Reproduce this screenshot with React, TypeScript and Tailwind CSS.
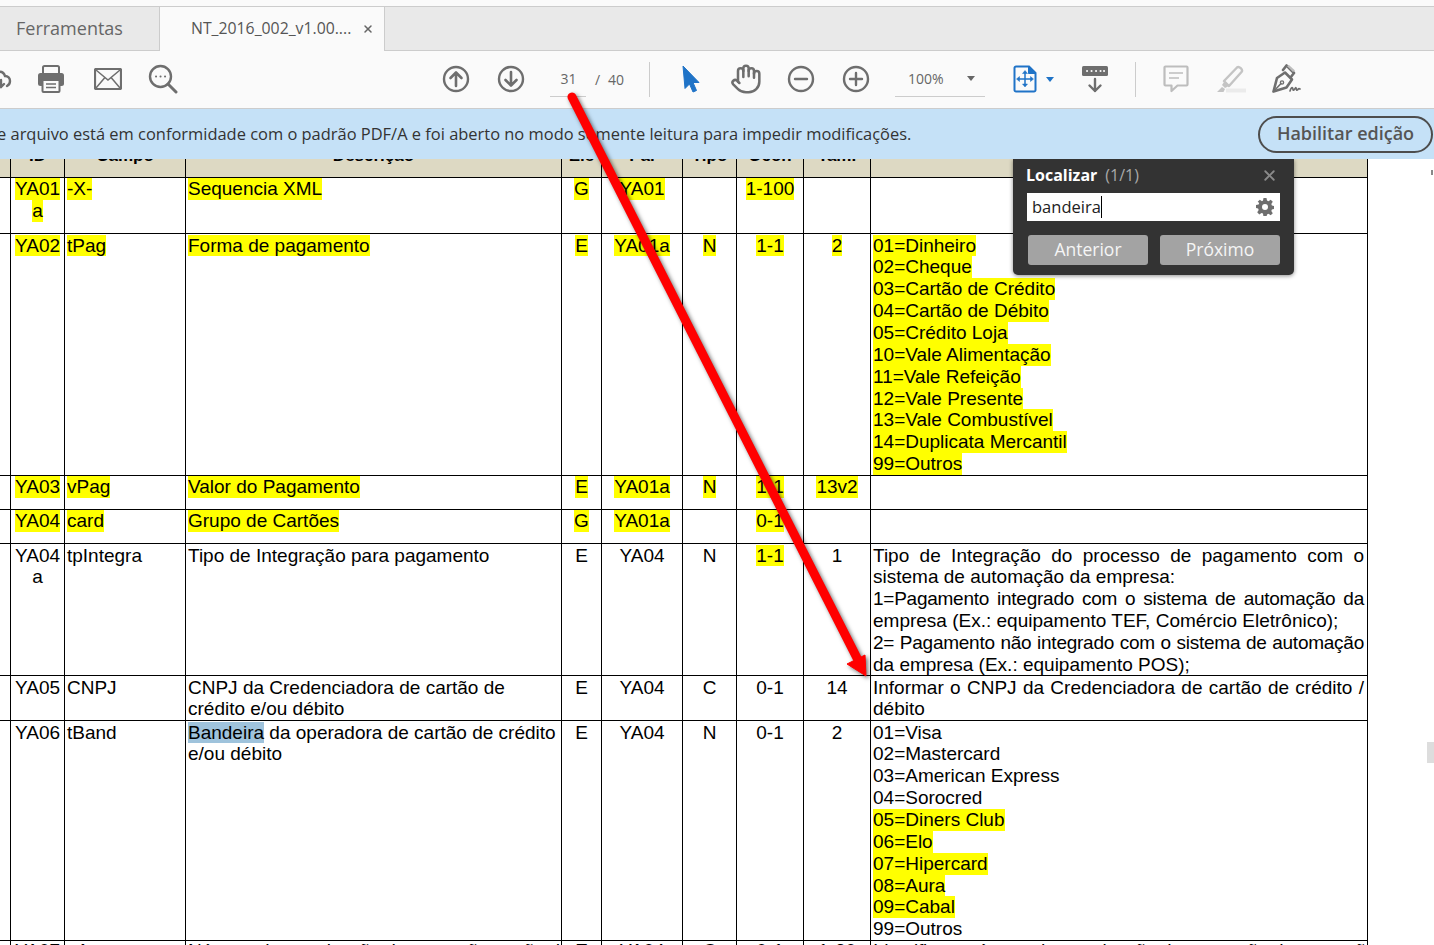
import type { ReactNode } from "react";
import { Hand, X } from "lucide-react";

const COLS = "grid-cols-[11px_54px_121px_376px_40px_81px_54px_67px_67px_497px]";
const ICON = "#6e6e6e";

function Line({ children, hit, center }: { children: ReactNode; hit?: boolean; center?: boolean }) {
  return (
    <div className={`h-[21.85px] whitespace-nowrap leading-[21.85px] ${center ? "text-center" : ""}`}>
      <span className={`inline-block h-[21.85px] ${hit ? "bg-[#ffff00]" : ""}`}>{children}</span>
    </div>
  );
}

// Lines of the notes column that the PDF stretches to the cell's full width
function Just({ children, tight }: { children: ReactNode; tight?: boolean }) {
  return (
    <div className={`h-[21.85px] whitespace-nowrap leading-[21.85px] [text-align-last:justify] ${tight ? "tracking-[-0.25px]" : ""}`}>
      {children}
    </div>
  );
}

function Peek({ children }: { children: ReactNode }) {
  return <div className="-mt-px">{children}</div>;
}

type Row = {
  h: string;
  nudge?: boolean;
  id: ReactNode;
  campo: ReactNode;
  desc: ReactNode;
  ele: ReactNode;
  pai: ReactNode;
  tipo: ReactNode;
  ocor: ReactNode;
  tam: ReactNode;
  obs: ReactNode;
};

const PAYMENT = [
  "01=Dinheiro",
  "02=Cheque",
  "03=Cartão de Crédito",
  "04=Cartão de Débito",
  "05=Crédito Loja",
  "10=Vale Alimentação",
  "11=Vale Refeição",
  "12=Vale Presente",
  "13=Vale Combustível",
  "14=Duplicata Mercantil",
  "99=Outros",
];

const BRANDS: [string, boolean][] = [
  ["01=Visa", false],
  ["02=Mastercard", false],
  ["03=American Express", false],
  ["04=Sorocred", false],
  ["05=Diners Club", true],
  ["06=Elo", true],
  ["07=Hipercard", true],
  ["08=Aura", true],
  ["09=Cabal", true],
  ["99=Outros", false],
];

const ROWS: Row[] = [
  {
    h: "h-[56px]",
    id: (
      <>
        <Line hit center>YA01</Line>
        <Line hit center>a</Line>
      </>
    ),
    campo: <Line hit>-X-</Line>,
    desc: <Line hit>Sequencia XML</Line>,
    ele: <Line hit center>G</Line>,
    pai: <Line hit center>YA01</Line>,
    tipo: null,
    ocor: <Line hit center>1-100</Line>,
    tam: null,
    obs: null,
  },
  {
    h: "h-[242px]",
    nudge: true,
    id: <Line hit center>YA02</Line>,
    campo: <Line hit>tPag</Line>,
    desc: <Line hit>Forma de pagamento</Line>,
    ele: <Line hit center>E</Line>,
    pai: <Line hit center>YA01a</Line>,
    tipo: <Line hit center>N</Line>,
    ocor: <Line hit center>1-1</Line>,
    tam: <Line hit center>2</Line>,
    obs: PAYMENT.map((item) => <Line key={item} hit>{item}</Line>),
  },
  {
    h: "h-[34px]",
    id: <Line hit center>YA03</Line>,
    campo: <Line hit>vPag</Line>,
    desc: <Line hit>Valor do Pagamento</Line>,
    ele: <Line hit center>E</Line>,
    pai: <Line hit center>YA01a</Line>,
    tipo: <Line hit center>N</Line>,
    ocor: <Line hit center>1-1</Line>,
    tam: <Line hit center>13v2</Line>,
    obs: null,
  },
  {
    h: "h-[34px]",
    id: <Line hit center>YA04</Line>,
    campo: <Line hit>card</Line>,
    desc: <Line hit>Grupo de Cartões</Line>,
    ele: <Line hit center>G</Line>,
    pai: <Line hit center>YA01a</Line>,
    tipo: null,
    ocor: <Line hit center>0-1</Line>,
    tam: null,
    obs: null,
  },
  {
    h: "h-[132px]",
    nudge: true,
    id: (
      <>
        <Line center>YA04</Line>
        <Line center>a</Line>
      </>
    ),
    campo: <Line>tpIntegra</Line>,
    desc: <Line>Tipo de Integração para pagamento</Line>,
    ele: <Line center>E</Line>,
    pai: <Line center>YA04</Line>,
    tipo: <Line center>N</Line>,
    ocor: <Line hit center>1-1</Line>,
    tam: <Line center>1</Line>,
    obs: (
      <>
        <Just>Tipo de Integração do processo de pagamento com o</Just>
        <Line>sistema de automação da empresa:</Line>
        <Just tight>1=Pagamento integrado com o sistema de automação da</Just>
        <Line>empresa (Ex.: equipamento TEF, Comércio Eletrônico);</Line>
        <Just tight>2= Pagamento não integrado com o sistema de automação</Just>
        <Line>da empresa (Ex.: equipamento POS);</Line>
      </>
    ),
  },
  {
    h: "h-[45px]",
    nudge: true,
    id: <Line center>YA05</Line>,
    campo: <Line>CNPJ</Line>,
    desc: (
      <>
        <Line>CNPJ da Credenciadora de cartão de</Line>
        <Line>crédito e/ou débito</Line>
      </>
    ),
    ele: <Line center>E</Line>,
    pai: <Line center>YA04</Line>,
    tipo: <Line center>C</Line>,
    ocor: <Line center>0-1</Line>,
    tam: <Line center>14</Line>,
    obs: (
      <>
        <Just>Informar o CNPJ da Credenciadora de cartão de crédito /</Just>
        <Line>débito</Line>
      </>
    ),
  },
  {
    h: "h-[220px]",
    nudge: true,
    id: <Line center>YA06</Line>,
    campo: <Line>tBand</Line>,
    desc: (
      <>
        <Line>
          <span className="bg-[#9fc3dc]">Bandeira</span> da operadora de cartão de crédito
        </Line>
        <Line>e/ou débito</Line>
      </>
    ),
    ele: <Line center>E</Line>,
    pai: <Line center>YA04</Line>,
    tipo: <Line center>N</Line>,
    ocor: <Line center>0-1</Line>,
    tam: <Line center>2</Line>,
    obs: BRANDS.map(([item, hit]) => <Line key={item} hit={hit}>{item}</Line>),
  },
  {
    h: "h-[30px]",
    id: <Peek><Line center>YA07</Line></Peek>,
    campo: <Peek><Line>cAut</Line></Peek>,
    desc: <Peek><Just tight>Número de autorização da operação cartão de crédito</Just></Peek>,
    ele: <Peek><Line center>E</Line></Peek>,
    pai: <Peek><Line center>YA04</Line></Peek>,
    tipo: <Peek><Line center>C</Line></Peek>,
    ocor: <Peek><Line center>0-1</Line></Peek>,
    tam: <Peek><Line center>1-20</Line></Peek>,
    obs: <Peek><Just tight>Identifica o número da autorização da transação da operação</Just></Peek>,
  },
];

function DocRow({ row }: { row: Row }) {
  const cells = [row.id, row.campo, row.desc, row.ele, row.pai, row.tipo, row.ocor, row.tam];
  const top = row.nudge ? "pt-[0.6px]" : "";
  return (
    <div className={`grid ${COLS} ${row.h} box-border w-[1368px] border-b border-black`}>
      <div className="border-r border-black" />
      {cells.map((cell, index) => (
        <div key={index} className={`overflow-hidden border-r border-black px-[2px] ${top}`}>
          {cell}
        </div>
      ))}
      <div className={`overflow-hidden border-r border-black pl-[2px] pr-[3px] ${top}`}>{row.obs}</div>
    </div>
  );
}

function HeaderRow() {
  const labels = ["ID", "Campo", "Descrição", "Ele", "Pai", "Tipo", "Ocor.", "Tam.", ""];
  return (
    <div className={`grid ${COLS} box-border h-[19px] w-[1368px] border-b border-black bg-[#ddd9c3]`}>
      <div className="border-r border-black" />
      {labels.map((label, index) => (
        <div key={index} className="overflow-hidden border-r border-black">
          <div className="-mt-[14px] text-center text-[17px] font-bold leading-[22px]">{label}</div>
        </div>
      ))}
    </div>
  );
}

function CircleIcon({ children }: { children: ReactNode }) {
  return (
    <svg width="28" height="28" viewBox="0 0 28 28" fill="none" stroke={ICON} strokeWidth="2.400" strokeLinecap="round" strokeLinejoin="round">
      <circle cx="14" cy="14" r="12" />
      {children}
    </svg>
  );
}

function Tool({ children }: { children: ReactNode }) {
  return <div className="flex h-full w-[55px] shrink-0 items-center justify-center">{children}</div>;
}

function Toolbar() {
  return (
    <div className="box-border flex h-[58px] items-center overflow-hidden border-b border-[#cccccc] bg-[#fafafa] pb-[1px] text-[14px] text-[#666666]">
      <div className="h-[28px] w-[12px] shrink-0 overflow-hidden">
        <svg width="12" height="28" viewBox="0 0 12 28" fill="none" stroke={ICON} strokeWidth="2.400" strokeLinecap="round">
          <path d="M-2 7c4-1 6 1 7 4 3 0 5 2 5 5 0 2-1 4-3 5M-2 19l3 3 3-3M1 22v-7" />
        </svg>
      </div>
      <div className="ml-[11px] flex h-full w-[56px] shrink-0 items-center justify-center">
        <svg width="28" height="28" viewBox="0 0 28 28">
          <path d="M6 9V2.500A1.500 1.500 0 0 1 7.500 1h13A1.500 1.500 0 0 1 22 2.500V9" fill="none" stroke={ICON} strokeWidth="2" />
          <rect x="1" y="8" width="26" height="13" rx="2.500" fill={ICON} />
          <rect x="5.500" y="15" width="17" height="12" rx="1" fill="#fafafa" stroke={ICON} strokeWidth="2" />
          <path d="M9 19h10M9 22.500h10" stroke={ICON} strokeWidth="1.500" />
        </svg>
      </div>
      <div className="ml-px flex h-full w-[56px] shrink-0 items-center justify-center">
        <svg width="28" height="22" viewBox="0 0 28 22" fill="none" stroke={ICON} strokeWidth="2">
          <rect x="1" y="1" width="26" height="20" rx="1" strokeWidth="2.200" />
          <path d="M2 2l12 10L26 2M2 20l8.500-10M26 20l-8.500-10" strokeWidth="1.500" />
        </svg>
      </div>
      <div className="-ml-px flex h-full w-[55px] shrink-0 items-center justify-center">
        <svg width="30" height="30" viewBox="0 0 30 30" fill="none" stroke={ICON} strokeWidth="2.400" strokeLinecap="round">
          <circle cx="12.500" cy="12.500" r="10.500" />
          <path d="M20 20l8 8" strokeWidth="3" />
          <path d="M8 12.500h.1M12.500 12.500h.1M17 12.500h.1" strokeWidth="2" />
        </svg>
      </div>

      <div className="ml-[238px] flex h-full shrink-0">
        <Tool>
          <CircleIcon>
            <path d="M14 21V8M8.500 13L14 7.500 19.500 13" strokeWidth="2.600" />
          </CircleIcon>
        </Tool>
        <Tool>
          <CircleIcon>
            <path d="M14 7v13M8.500 15l5.500 5.500 5.500-5.500" strokeWidth="2.600" />
          </CircleIcon>
        </Tool>
      </div>

      <div className="ml-[12px] box-border flex h-[35px] w-[36px] shrink-0 items-center justify-center border-b border-[#cccccc] pl-[1px]">31</div>
      <span className="ml-[9px] w-[8px] shrink-0">/</span>
      <span className="ml-[5px] shrink-0">40</span>
      <div className="ml-[25px] h-[35px] w-px shrink-0 bg-[#cccccc]" />

      <div className="ml-[13px] flex h-full shrink-0">
        <Tool>
          <svg width="18" height="28" viewBox="0 0 18 28">
            <path d="M1 1l16 16.500h-6l3.500 8-3.500 1.500-3.500-8L3 23.500z" fill="#1f73c7" stroke="#1f73c7" strokeLinejoin="round" />
          </svg>
        </Tool>
        <Tool>
          <Hand size={32} strokeWidth={1.900} color={ICON} />
        </Tool>
        <Tool>
          <CircleIcon>
            <path d="M8 14h12" />
          </CircleIcon>
        </Tool>
        <Tool>
          <CircleIcon>
            <path d="M8 14h12M14 8v12" />
          </CircleIcon>
        </Tool>
      </div>

      <div className="ml-[12px] box-border flex h-[35px] w-[90px] shrink-0 items-center border-b border-[#cccccc] pl-[13px]">
        <span>100%</span>
        <span className="ml-[23px] h-0 w-0 border-x-[4px] border-t-[5px] border-x-transparent border-t-[#666666]" />
      </div>

      <div className="ml-[28px] shrink-0">
        <svg width="24" height="28" viewBox="0 0 24 28" fill="none" stroke="#1f73c7" strokeWidth="2">
          <path d="M1.500 3A1.500 1.500 0 0 1 3 1.500h13l6.500 6.500v17A1.500 1.500 0 0 1 21 26.500H3A1.500 1.500 0 0 1 1.500 25z" />
          <path d="M15.500 1.500V8.500h7" fill="#1f73c7" strokeWidth="1" />
          <path d="M12 7v13M5.500 14h13" strokeWidth="1.500" />
          <path d="M12 5.500l-2.500 3h5zM12 22l-2.500-3h5zM3.500 14l3-2.500v5zM20.500 14l-3-2.500v5z" fill="#1f73c7" strokeWidth="0.500" />
        </svg>
      </div>
      <span className="ml-[9px] h-0 w-0 shrink-0 border-x-[4px] border-t-[5px] border-x-transparent border-t-[#1f73c7]" />

      <div className="ml-[27px] shrink-0">
        <svg width="28" height="28" viewBox="0 0 28 28" fill="none">
          <rect x="1" y="1" width="26" height="10" rx="1.500" fill={ICON} />
          <path d="M6 6h.1M10.500 6h.1M15 6h.1M19.500 6h.1M23 6h.1" stroke="#fafafa" strokeWidth="2" strokeLinecap="round" />
          <path d="M14 14v12M8.500 20.500L14 26l5.500-5.500" stroke={ICON} strokeWidth="2.400" strokeLinecap="round" strokeLinejoin="round" />
        </svg>
      </div>

      <div className="ml-[26px] h-[35px] w-px shrink-0 bg-[#cccccc]" />

      <div className="ml-[27px] shrink-0">
        <svg width="26" height="28" viewBox="0 0 26 28" fill="none" stroke="#bdbdbd" strokeWidth="2.200" strokeLinejoin="round">
          <path d="M2.500 1.500h21a1 1 0 0 1 1 1v17a1 1 0 0 1-1 1H14.500l-6 5.500v-5.500h-6a1 1 0 0 1-1-1v-17a1 1 0 0 1 1-1z" />
          <path d="M6 8h14M6 13h10" strokeWidth="1.400" />
        </svg>
      </div>

      <div className="ml-[27px] shrink-0">
        <svg width="30" height="28" viewBox="0 0 30 28" fill="none">
          <path d="M8 16L21 2.500c2-1.800 6.500 2 4.500 4.500L13 21z" fill="#fafafa" stroke="#c4c4c4" strokeWidth="2.400" strokeLinejoin="round" />
          <path d="M8 17l5 4-4 2-3-3zM1 27l5-5 3 2-1.500 3z" fill="#c4c4c4" />
          <rect x="10" y="23.500" width="20" height="4" fill="#ebebeb" />
        </svg>
      </div>

      <div className="ml-[26px] shrink-0">
        <svg width="30" height="30" viewBox="0 0 30 30" fill="none" stroke={ICON} strokeWidth="2.600" strokeLinejoin="round" strokeLinecap="round">
          <path d="M1.500 27.500L5 14l8-5.500 7 7-5.500 8z" />
          <path d="M1.500 27.500L9 19.500" strokeWidth="1.600" />
          <circle cx="10" cy="18.500" r="1.600" strokeWidth="1.400" />
          <path d="M11 6L14.500 1.500 22 9l-3.500 4.500" />
          <path d="M15 2l6 6 2-1.500L17 1z" fill="#bdbdbd" stroke="none" />
          <path d="M18 27c1-3 2-4 2.500-3s.5 3 1.500 2 1.500-3 2-2 .5 3 1.500 2 1-2 2.500-1" strokeWidth="1.700" />
        </svg>
      </div>
    </div>
  );
}

function FindPanel() {
  return (
    <div className="absolute left-[1013px] top-0 z-20 box-border h-[116px] w-[281px] rounded-b-[5px] bg-[#333333] px-[14px] font-['Open_Sans',sans-serif] shadow-[0_1px_4px_rgba(0,0,0,0.45)]">
      <div className="-ml-px flex h-[33px] items-center pb-[1px]">
        <span className="text-[16px] font-bold text-white">Localizar</span>
        <span className="ml-[8px] text-[16px] text-[#a9a9a9]">(1/1)</span>
        <X size={17} strokeWidth={2.600} color="#8a8a8a" className="ml-auto mr-[2px]" />
      </div>
      <div className="mt-px flex h-[28px] items-center bg-white pl-[5px] pr-[5px] text-[16.500px] text-[#222222]">
        <span>bandeira</span>
        <span className="h-[22px] w-px bg-black" />
        <svg className="ml-auto mr-[1px]" width="18" height="18" viewBox="0 0 18 18">
          <path
            d="M7.500 0h3l.5 2.600 1.500.6L14.700 1.700l2.100 2.100-1.500 2.200.6 1.500 2.600.5v3l-2.600.5-.6 1.500 1.500 2.200-2.100 2.100-2.200-1.500-1.500.6-.5 2.600h-3L7 15.500l-1.500-.6-2.200 1.500-2.100-2.100 1.500-2.200-.6-1.500L0 10.100v-3l2.600-.5.6-1.500L1.700 3.800l2.100-2.100 2.200 1.500L7 2.600z"
            fill={ICON}
          />
          <circle cx="9" cy="9" r="3" fill="#ffffff" />
        </svg>
      </div>
      <div className="mt-[14px] flex justify-between pl-px">
        <div className="flex h-[30px] w-[120px] items-center justify-center rounded-[3px] bg-[#a3a3a3] pb-[2px] text-[17.500px] font-medium text-[#f5f5f5]">Anterior</div>
        <div className="flex h-[30px] w-[120px] items-center justify-center rounded-[3px] bg-[#a3a3a3] pb-[2px] text-[17.500px] font-medium text-[#f5f5f5]">Próximo</div>
      </div>
    </div>
  );
}

function RedArrow() {
  return (
    <svg className="pointer-events-none absolute left-0 top-0 z-30 drop-shadow-[2px_2px_2px_rgba(0,0,0,0.55)]" width="1434" height="945" viewBox="0 0 1434 945" fill="none">
      <path d="M572 97L857 658" stroke="#ff0000" strokeWidth="9" strokeLinecap="round" />
      <path d="M866 676L847 664L865 655z" fill="#ff0000" stroke="#ff0000" strokeLinejoin="round" />
    </svg>
  );
}

export default function App() {
  return (
    <div className="relative h-[945px] w-[1434px] overflow-hidden bg-white [font-family:'Open_Sans',sans-serif]">
      <div className="h-[6px] bg-[#fafafa]" />
      <div className="box-border flex h-[45px] border-y border-[#cccccc] bg-[#e9e9e9]">
        <div className="flex w-[160px] items-center border-r border-[#cccccc] pl-[16px] text-[18px] text-[#666666]">Ferramentas</div>
        <div className="-mb-px flex w-[225px] items-center border-r border-[#cccccc] bg-[#fafafa] pl-[31px] text-[15.800px] text-[#555555]">
          <span>NT_2016_002_v1.00....</span>
          <X size={12} strokeWidth={3} color="#666666" className="ml-[11px]" />
        </div>
      </div>
      <Toolbar />
      <div className="flex h-[50px] items-center justify-between bg-[#c5e1f7] text-[#333333]">
        <span className="-ml-[3px] whitespace-nowrap text-[16.450px]">e arquivo está em conformidade com o padrão PDF/A e foi aberto no modo somente leitura para impedir modificações.</span>
        <div className="mr-px flex h-[37px] w-[175px] items-center justify-center rounded-full border-2 border-[#4d4d4d] pb-[2px] text-[18px] font-semibold text-[#555555]">
          Habilitar edição
        </div>
      </div>
      <div className="relative h-[786px] overflow-hidden bg-white font-['Liberation_Sans',Arial,sans-serif] text-[19px] text-black">
        <HeaderRow />
        {ROWS.map((row, index) => (
          <DocRow key={index} row={row} />
        ))}
        <FindPanel />
        <div className="absolute right-0 top-[583px] h-[21px] w-[7px] bg-[#dddddd]" />
        <div className="absolute right-[1px] top-[11px] h-[5px] w-[2px] bg-[#888888]" />
      </div>
      <RedArrow />
    </div>
  );
}
